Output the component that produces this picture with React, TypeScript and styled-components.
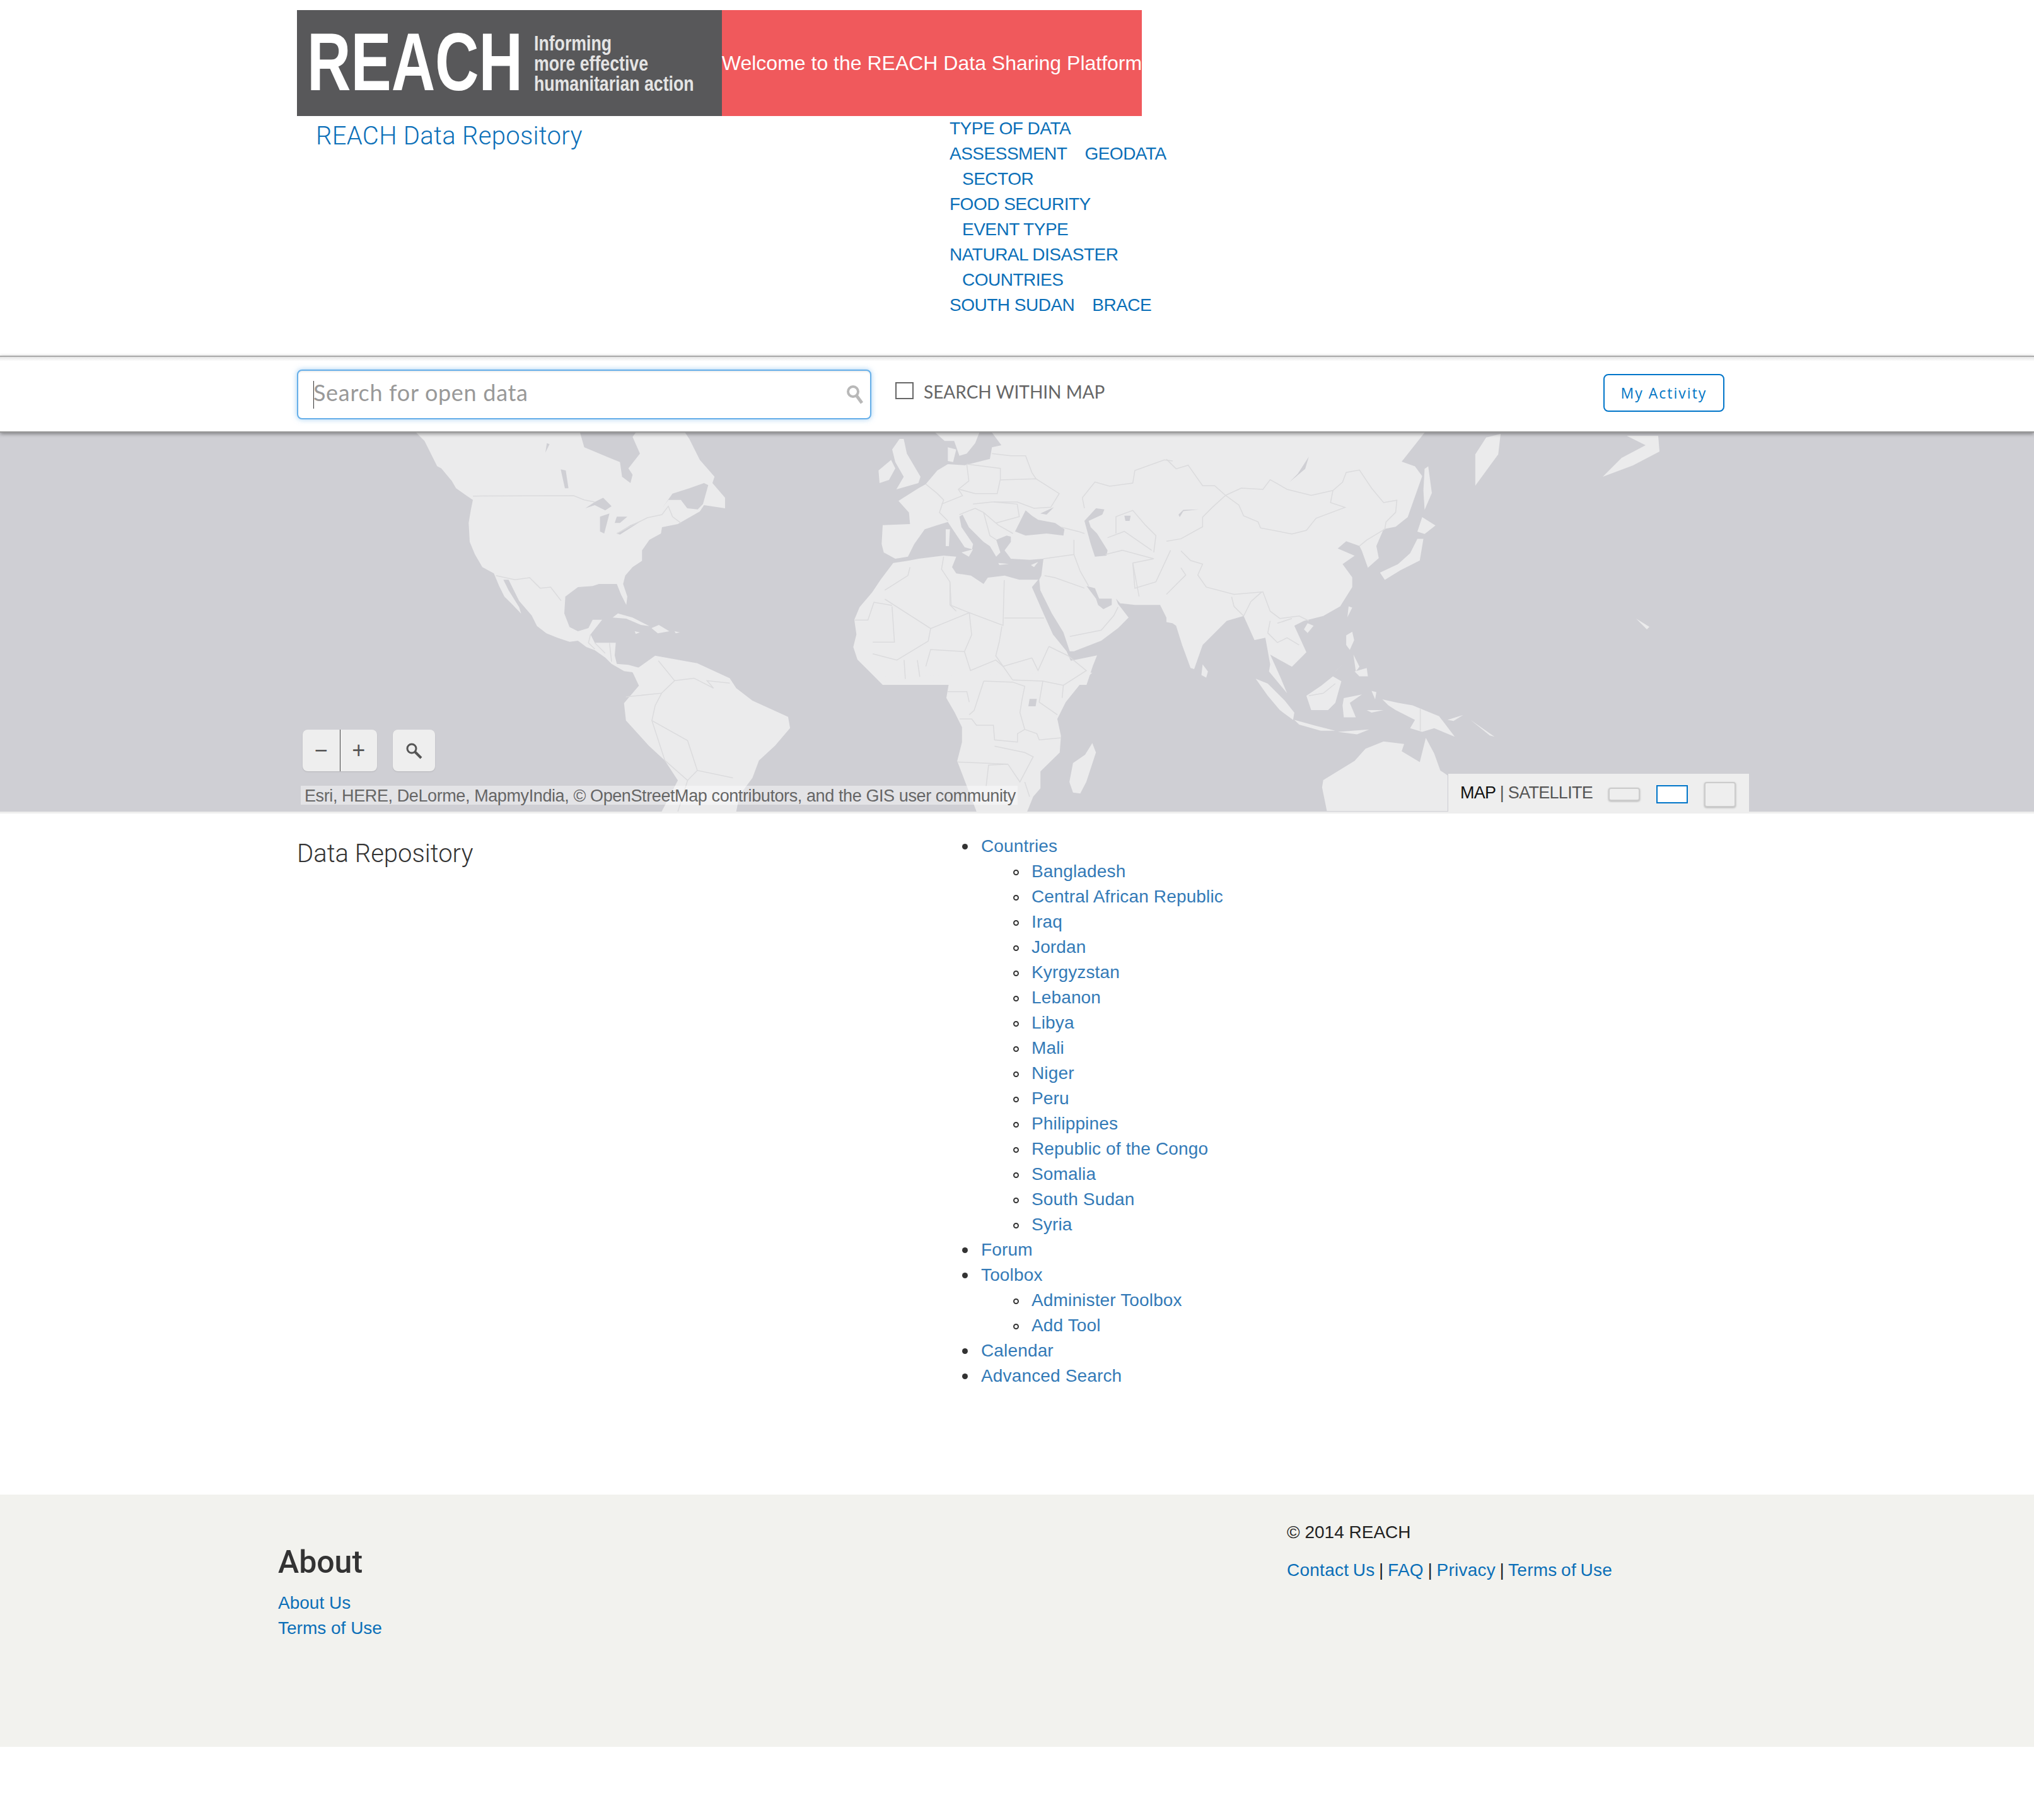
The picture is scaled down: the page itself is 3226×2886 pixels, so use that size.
import React from 'react'
import styled, { createGlobalStyle } from 'styled-components'

const LINK = '#0b6fb8'
const SUBLINK = '#337ab7'
const WATER = '#cfcfd4'
const LAND = '#ebebec'

const GlobalStyle = createGlobalStyle`
  html, body {
    margin: 0;
    padding: 0;
    background: #fff;
    font-family: "Liberation Sans", Arial, sans-serif;
    color: #333;
  }
  a { text-decoration: none; color: inherit; }
`

const Page = styled.div`
  width: 3226px;
  height: 2886px;
  overflow: hidden;
`

const Banner = styled.div`
  display: flex;
  width: 1340px;
  height: 168px;
  margin: 16px 0 0 471px;
`

const Logo = styled.div`
  width: 674px;
  display: flex;
  align-items: center;
  padding-left: 16px;
  box-sizing: border-box;
  background: #58585a;
  color: #fff;
`

const LogoMark = styled.div`
  width: 360px;
  margin-top: -4px;
  font-size: 130px;
  line-height: 130px;
  font-weight: 700;
  transform: scaleX(0.74);
  transform-origin: left center;
  white-space: nowrap;
`

const LogoTag = styled.div`
  margin-top: -1px;
  font-size: 34px;
  line-height: 32px;
  font-weight: 700;
  color: #e4e4e4;
  transform: scaleX(0.785);
  transform-origin: left center;
  white-space: nowrap;
`

const Welcome = styled.div`
  width: 666px;
  display: flex;
  align-items: center;
  justify-content: center;
  background: #f0595c;
  color: #fff;
  font-size: 32px;
  white-space: nowrap;
`

const TopRow = styled.div`
  display: flex;
  height: 380px;
  margin-left: 471px;
`

const SiteTitle = styled.div`
  width: 1004px;
  padding: 4px 0 0 30px;
  box-sizing: content-box;
  font-family: Roboto, "Liberation Sans", sans-serif;
  font-weight: 300;
  font-size: 40px;
  line-height: 56px;
  letter-spacing: 0.3px;
  color: ${LINK};
`

const Nav = styled.div`
  margin-left: 1px;
  font-size: 28px;
  line-height: 40px;
  letter-spacing: -0.5px;
  color: ${LINK};
`

const NavRow = styled.div<{ $indent?: boolean }>`
  display: flex;
  gap: 28px;
  padding-left: ${(p) => (p.$indent ? '20px' : '0')};
`

const SearchBand = styled.div`
  position: relative;
  z-index: 1;
  display: flex;
  align-items: center;
  height: 122px;
  padding: 0 491px 0 471px;
  box-sizing: border-box;
  background: linear-gradient(#e6e6e6 0, #fff 7px);
  border-top: 2px solid #aaa;
  border-bottom: 2px solid #999;
  box-shadow: 0 2px 6px rgba(0, 0, 0, 0.4);
`

const SearchBox = styled.div`
  position: relative;
  width: 911px;
  height: 79px;
  box-sizing: border-box;
  border: 2px solid #66afe9;
  border-radius: 8px;
  background: #fff;
  box-shadow: 0 0 8px rgba(102, 175, 233, 0.6), inset 0 2px 2px rgba(0, 0, 0, 0.07);
`

const SearchInput = styled.input`
  width: 100%;
  height: 100%;
  box-sizing: border-box;
  padding: 0 70px 6px 24px;
  border: 0;
  outline: 0;
  background: transparent;
  font-family: Lato, sans-serif;
  font-size: 36px;
  letter-spacing: 0.7px;
  color: #555;
  &::placeholder {
    color: #999;
    opacity: 1;
  }
`

const Caret = styled.span`
  position: absolute;
  left: 24px;
  top: 16px;
  width: 1px;
  height: 44px;
  background: #333;
`

const SearchGlyph = styled.svg`
  position: absolute;
  right: 10px;
  top: 22px;
  width: 28px;
  height: 32px;
`

const WithinMap = styled.label`
  display: flex;
  align-items: center;
  gap: 16px;
  margin: -8px 0 0 38px;
  font-family: Lato, sans-serif;
  font-size: 28px;
  color: #666;
  white-space: nowrap;
`

const CheckBox = styled.span`
  width: 29px;
  height: 27px;
  box-sizing: border-box;
  border: 2px solid #666;
  background: #fff;
  margin-top: -4px;
`

const ActivityButton = styled.button`
  margin: -4px 0 0 auto;
  width: 192px;
  height: 60px;
  background: #fff;
  border: 2px solid #0075c9;
  border-radius: 8px;
  font-family: "Open Sans", sans-serif;
  font-size: 23px;
  letter-spacing: 2px;
  color: #0075c4;
`

const MapArea = styled.div`
  position: relative;
  height: 601px;
  background: ${WATER};
  border-bottom: 3px solid #eee;
  overflow: hidden;
`

const MapSvg = styled.svg`
  display: block;
  width: 100%;
  height: 100%;
`

const Borders = styled.g`
  fill: none;
  stroke: #dbdbdd;
  stroke-width: 1.5px;
  path { vector-effect: non-scaling-stroke; }
`

const ZoomGroup = styled.div`
  position: absolute;
  left: 480px;
  top: 471px;
  display: flex;
  gap: 25px;
`

const ZoomPair = styled.div`
  display: flex;
  width: 118px;
  height: 66px;
  background: #eee;
  border-radius: 8px;
  box-shadow: 0 1px 2px rgba(0, 0, 0, 0.12);
`

const ZoomKey = styled.div<{ $divider?: boolean }>`
  flex: 1;
  display: flex;
  align-items: center;
  justify-content: center;
  font-size: 36px;
  color: #555;
  border-left: ${(p) => (p.$divider ? '1px solid #444' : '0')};
`

const LocateKey = styled.div`
  display: flex;
  align-items: center;
  justify-content: center;
  width: 67px;
  height: 66px;
  background: #eee;
  border-radius: 8px;
  box-shadow: 0 1px 2px rgba(0, 0, 0, 0.12);
`

const Attribution = styled.div`
  position: absolute;
  left: 477px;
  top: 560px;
  width: 1137px;
  height: 30px;
  box-sizing: border-box;
  padding-left: 6px;
  background: rgba(255, 255, 255, 0.42);
  font-size: 27px;
  line-height: 32px;
  letter-spacing: -0.4px;
  color: #666;
  white-space: nowrap;
`

const BasemapPanel = styled.div`
  position: absolute;
  left: 2297px;
  top: 541px;
  bottom: 0;
  width: 477px;
  display: flex;
  align-items: center;
  padding: 5px 21px 0 19px;
  box-sizing: border-box;
  background: #eee;
  font-size: 27px;
  letter-spacing: -0.7px;
  color: #555;
`

const MapLabel = styled.span`
  color: #111;
`

const PanelText = styled.div`
  flex: 1;
  margin-top: -5px;
  white-space: nowrap;
`

const Thumbs = styled.div`
  display: flex;
  align-items: center;
  gap: 26px;
`

const Thumb = styled.div<{ $h: number; $active?: boolean }>`
  width: 50px;
  height: ${(p) => p.$h}px;
  box-sizing: border-box;
  background: ${(p) => (p.$active ? '#fff' : '#eee')};
  border: 2px solid ${(p) => (p.$active ? '#0075c9' : '#ccc')};
  border-radius: ${(p) => (p.$active ? '0' : '4px')};
  box-shadow: ${(p) => (p.$active ? 'none' : '0 1px 3px rgba(0, 0, 0, 0.25)')};
`

const Content = styled.div`
  display: flex;
  height: 1080px;
  padding: 32px 0 0 471px;
  box-sizing: border-box;
`

const SectionTitle = styled.div`
  width: 1005px;
  padding-top: 4px;
  font-family: Roboto, "Liberation Sans", sans-serif;
  font-weight: 300;
  font-size: 40px;
  line-height: 56px;
  color: #333;
`

const SiteList = styled.ul`
  margin: 0;
  padding-left: 80px;
  list-style: none;
  font-size: 28px;
  line-height: 40px;
  letter-spacing: 0.15px;
  color: #333;
  a { color: ${SUBLINK}; }
  > li::before {
    content: '';
    display: inline-block;
    width: 9px;
    height: 9px;
    margin: 0 21px 0 -30px;
    vertical-align: 4px;
    border-radius: 50%;
    background: #333;
  }
`

const SubList = styled.ul`
  margin: 0;
  padding-left: 80px;
  list-style: none;
  > li::before {
    content: '';
    display: inline-block;
    width: 9px;
    height: 9px;
    margin: 0 20px 0 -29px;
    vertical-align: 3px;
    box-sizing: border-box;
    border: 2px solid #333;
    border-radius: 50%;
  }
`

const Footer = styled.footer`
  display: flex;
  height: 400px;
  padding-left: 441px;
  background: #f2f2ee;
  font-size: 28px;
  line-height: 40px;
  color: #222;
  a { color: ${LINK}; }
`

const FooterLeft = styled.div`
  width: 1600px;
  padding-top: 79px;
`

const FooterHeading = styled.div`
  font-family: Roboto, "Liberation Sans", sans-serif;
  font-weight: 500;
  font-size: 50px;
  line-height: 56px;
  margin-bottom: 17px;
  color: #333;
`

const FooterRight = styled.div`
  padding-top: 40px;
`

const FooterLinks = styled.div`
  margin-top: 20px;
  letter-spacing: 0.25px;
  word-spacing: -1.5px;
`

const navRows = [
  { links: ['TYPE OF DATA'] },
  { links: ['ASSESSMENT', 'GEODATA'] },
  { links: ['SECTOR'], indent: true },
  { links: ['FOOD SECURITY'] },
  { links: ['EVENT TYPE'], indent: true },
  { links: ['NATURAL DISASTER'] },
  { links: ['COUNTRIES'], indent: true },
  { links: ['SOUTH SUDAN', 'BRACE'] },
]

const countries = [
  'Bangladesh', 'Central African Republic', 'Iraq', 'Jordan', 'Kyrgyzstan', 'Lebanon', 'Libya', 'Mali',
  'Niger', 'Peru', 'Philippines', 'Republic of the Congo', 'Somalia', 'South Sudan', 'Syria',
]

const mapLayers = [
  {
    // North and Central America
    transform: 'translate(650 0) scale(0.3333)',
    land: [
      'M30 0L70 40 100 100 130 160 150 170 200 230 220 265 270 300 300 320 290 370 280 430 285 520 310 580 345 640 400 670 425 730 450 780 490 820 530 862 520 830 470 750 445 700 470 700 520 800 580 870 605 920 650 955 700 975 760 995 800 990 840 1020 880 1035 930 1070 960 1100 1020 1135 1060 1140 1085 1170 1095 1120 1040 1105 985 1100 975 1060 980 1000 920 1000 880 1000 860 960 915 890 870 890 850 930 800 945 760 925 735 860 740 780 800 735 870 730 900 720 985 720 1005 770 1030 820 1035 780 1015 720 1025 680 1060 640 1105 610 1105 560 1140 510 1195 480 1200 450 1275 435 1380 375 1400 345 1500 360 1500 310 1440 240 1450 210 1380 130 1330 30 1310 0Z',
      'M965 880L990 860 1060 880 1140 920 1100 915 1030 885Z',
      'M1150 930L1185 915 1235 945 1180 955Z',
      'M1070 945L1095 950 1075 958Z',
      'M1260 945L1285 950 1265 955Z',
    ],
    water: [
      'M810 0L830 70 950 120 1000 140 1010 210 1050 240 1060 200 1040 170 1095 100 1060 20 1075 0Z',
      'M1200 360L1250 290 1330 265 1400 240 1420 250 1395 340 1370 365 1320 360 1290 320 1230 320Z',
      'M835 360L880 330 920 310 960 350 930 370 880 345Z',
      'M905 400L950 385 925 480 905 470Z',
      'M985 400L1035 400 1000 430 975 430Z',
      'M985 480L1050 440 1110 415 1055 450 1000 485Z',
      'M718 175L742 180 755 265 738 265Z',
      'M652 50L665 55 645 95Z',
    ],
    borders: [
      'M300 302L780 300 830 320 880 330',
      'M985 480L1060 440 1130 405 1200 390 1230 350 1250 400 1290 430',
      'M410 680L500 700 570 690 620 740 670 735 720 800',
      'M860 960L850 1000 880 1030',
      'M880 1000L930 1050',
      'M950 1000L960 1090',
    ],
  },
  {
    // South America, traced from a crop that was stretched vertically
    transform: 'translate(0 -6) scale(1.0288 0.3954)',
    land: [
      'M975 975L1010 910 1075 940 1125 1000 1135 1040 1160 1090 1215 1155 1218 1200 1195 1270 1170 1330 1160 1400 1140 1470 1135 1535 1020 1535 1045 1410 1025 1330 1000 1270 965 1170 962 1100 985 1030Z',
    ],
    water: [],
    borders: [
      'M1015 930L1040 1010 1020 1060 965 1075',
      'M1040 1010L1070 1000 1100 1040 1090 1010 1125 1020',
      'M1020 1060L1010 1110 1005 1170 1060 1250 1075 1370 1130 1400',
      'M1005 1170L1025 1330 1060 1410 1045 1535',
      'M1075 1370L1060 1410',
    ],
  },
  {
    // Europe, Middle East, north of Africa
    transform: 'translate(1340 0) scale(0.3333)',
    land: [
      'M180 440L310 435 305 380 255 325 350 265 385 245 440 180 490 150 570 155 690 125 700 70 745 60 700 0 1560 0 1560 905 1530 880 1500 820 1380 820 1310 812 1290 790 1300 815 1350 880 1300 930 1220 990 1090 1040 1070 1040 1040 950 985 860 930 750 925 700 935 680 945 600 880 605 790 600 760 560 790 520 790 495 770 490 720 510 740 570 720 590 690 540 660 520 590 450 560 390 545 400 555 450 610 530 605 555 570 545 520 470 490 425 440 440 380 460 330 530 300 590 240 600 185 570 175 530Z',
      'M230 620L300 610 350 600 470 585 530 590 510 640 530 670 600 680 660 720 680 690 760 680 830 700 920 700 890 735 945 860 990 960 1055 1040 1075 1085 1200 1060 1180 1110 1150 1200 180 1200 130 1150 60 1080 40 1020 55 960 45 890 70 830 130 760 170 700Z',
      'M430 0L475 40 520 40 545 110 580 100 620 50 640 0Z',
      'M490 70L530 80 515 140 490 135Z',
      'M260 30L280 30 295 100 360 210 350 240 245 270 280 210 240 140 225 80Z',
      'M160 180L220 130 240 170 210 225 165 240Z',
      'M480 460L500 460 495 540 480 540Z',
      'M555 570L610 555 590 590Z',
      'M730 620L780 625 735 630Z',
      'M885 630L920 615 900 640Z',
    ],
    water: [
      'M810 470L860 370 890 395 920 415 1000 430 1045 460 1040 490 960 480 860 490Z',
      'M930 385L995 355 960 390Z',
      'M1140 420L1195 360 1235 365 1225 390 1160 420 1170 450 1200 480 1250 560 1245 585 1190 590 1170 530Z',
      'M1150 730L1190 740 1210 790 1270 790 1270 820 1230 840 1205 820 1195 790Z',
      'M1330 395L1360 395 1355 420 1335 420Z',
    ],
    borders: [
      'M385 245L440 290 470 320 450 380 490 420',
      'M580 150L590 230 540 270 560 300 460 340',
      'M580 150L740 170 740 220 725 290 620 290 545 270',
      'M700 100L790 110 860 110 890 190 910 220',
      'M740 225L910 220 1020 290 980 355 900 360 820 330 700 330 610 340',
      'M710 330L820 340 830 400 720 430',
      'M545 390L620 360 660 380 730 440 800 480',
      'M660 380L690 490 720 510',
      'M1030 450L1110 470 1140 480',
      'M1090 510L1090 580 945 600',
      'M1090 580L1120 660 1160 730',
      'M950 680L1000 690 1140 740',
      'M1370 620L1400 780',
      'M1240 580L1320 560 1470 600 1370 620',
      'M1130 310L1190 235 1260 255 1370 240 1380 180 1520 130 1560 135',
      'M1130 310L1140 360',
      'M1290 480L1290 400 1370 370 1430 440 1480 490 1470 570',
      'M1250 500L1330 470 1460 560',
      'M1370 620L1380 740 1480 710 1550 560',
      'M1070 970L1220 940 1280 870 1300 830',
      'M310 640L300 680 190 750',
      'M470 590L460 650 500 710 500 820 530 850',
    ],
  },
  {
    // rest of Africa
    transform: 'translate(1300 214) scale(0.3827 0.3333)',
    land: [
      'M230 520L1130 500 1090 540 1020 640 985 720 1000 800 995 880 915 970 915 1050 885 1090 860 1161 650 1161 640 1130 600 1010 570 920 590 830 590 760 560 690 525 620 535 555 480 545 430 520 300 545 260 540Z',
      'M1130 835L1145 880 1105 1020 1080 1075 1050 1070 1035 1020 1050 930 1100 890Z',
    ],
    water: ['M870 625L900 625 895 660 865 660Z'],
    borders: [
      'M270 150L460 290 620 215 760 275 765 60',
      'M300 185L310 355 220 355',
      'M145 250L200 250 225 165 300 180',
      'M460 290L450 350 320 440 220 410',
      'M620 215L630 320 600 400 460 390 440 470',
      'M765 240L930 240',
      'M755 280L745 350 730 420 800 535',
      'M600 400L625 490 730 440 760 470 880 430',
      'M880 430L905 490 950 375',
      'M950 375L1030 420 1105 490 1010 560 925 540 800 535',
      'M680 540L800 545 850 565 840 620 830 690 850 770 820 790 820 830 725 820 720 750 650 750 630 720 580 720',
      'M680 540L640 680 620 700',
      'M925 540L910 640 985 700',
      'M1010 560L1005 620',
      'M850 770L900 790 910 820 1000 810',
      'M570 925L780 935 830 1020 885 900 850 880 725 850',
      'M780 935L700 940 690 1040',
      'M850 1020L870 1090',
      'M530 590L610 590 620 640',
      'M540 70L545 180 620 215',
      'M350 440L355 530',
      'M405 440L415 520',
    ],
  },
  {
    // Asia and Australia
    transform: 'translate(1850 0) scale(0.3827)',
    land: [
      'M0 0L1070 0 975 120 1030 140 1060 180 1000 350 950 390 900 400 870 470 880 520 835 560 810 490 800 470 745 450 710 480 780 510 730 545 770 600 770 640 720 720 650 760 570 780 530 800 580 910 520 970 430 920 475 1020 500 1080 450 1020 425 990 430 960 410 850 365 860 320 760 250 780 150 880 115 980 100 975 65 880 40 800 25 790 0 785Z',
      'M650 1440L780 1360 825 1310 900 1280 985 1290 975 1320 1050 1365 1075 1265 1110 1330 1135 1400 1165 1420 1165 1568 665 1568 645 1470Z',
      'M150 960L172 990 165 1015 145 1005Z',
      'M585 790L610 800 585 830 570 815Z',
      'M755 720L770 725 750 765Z',
      'M885 580L960 545 1010 500 1040 440 1065 440 1050 530 970 570 905 610Z',
      'M1040 410L1060 350 1115 385 1070 420Z',
      'M1070 150L1085 140 1100 250 1070 320 1065 240Z',
      'M1280 90L1325 20 1385 5 1375 90 1280 220Z',
      'M745 840L770 825 778 860 760 900 745 880Z',
      'M775 920L800 970 785 990Z',
      'M780 990L830 975 835 1010 800 1010Z',
      'M700 990L730 960 705 985Z',
      'M370 1020L420 1040 490 1110 530 1160 525 1190 470 1150 420 1090Z',
      'M530 1190L620 1215 700 1235 640 1235 550 1210Z',
      'M710 1240L840 1230 790 1250Z',
      'M580 1090L640 1050 690 1010 725 1030 700 1120 670 1150 600 1150Z',
      'M735 1100L810 1085 760 1120 785 1180 735 1180 730 1130Z',
      'M850 1070L870 1075 865 1105Z',
      'M830 1150L900 1150 850 1160Z',
      'M895 1105L960 1120 1020 1130 1130 1175 1195 1260 1110 1225 1060 1240 1010 1225 1030 1190 950 1150 920 1130Z',
      'M1165 1190L1230 1170 1190 1195Z',
      'M1260 1190L1360 1260 1340 1255Z',
    ],
    water: [
      'M590 100L575 150 510 205 545 170Z',
      'M50 340L70 320 135 318 70 325 55 350Z',
    ],
    borders: [
      'M0 110L40 150 90 135 150 220 200 220 245 260',
      'M245 260L310 230 400 235 430 195 500 235 600 260 690 240 730 205 745 165 800 155 850 230 900 290 955 280 950 330 910 370 905 400 830 445 800 470',
      'M245 260L300 300 320 345 380 370 390 395 520 420 580 405 620 355 740 310 680 290 690 240',
      'M245 260L190 310 150 350 150 390 60 440 0 450',
      'M60 490L100 530 150 545 130 590 165 640 280 670 400 660 430 740 470 770 550 760 590 780',
      'M0 670L50 620 80 590 60 560',
      'M270 680L280 720 320 760 350 700 395 660',
      'M430 780L420 830 460 870 500 850 550 880',
      'M460 790L520 770',
      'M590 1090L650 1080 700 1040',
      'M1052 1145L1052 1235',
    ],
  },
  {
    // Kuril arc and Hawaii, in page pixels
    transform: '',
    land: [
      'M2580 5L2630 5 2632 30 2590 52 2542 70 2572 40 2610 20Z',
      'M2595 295L2616 308 2612 312Z',
    ],
    water: [],
    borders: [],
  },
]

export default function App() {
  return (
    <Page>
      <GlobalStyle />
      <Banner>
        <Logo>
          <LogoMark>REACH</LogoMark>
          <LogoTag>
            Informing
            <br />
            more effective
            <br />
            humanitarian action
          </LogoTag>
        </Logo>
        <Welcome>Welcome to the REACH Data Sharing Platform</Welcome>
      </Banner>

      <TopRow>
        <SiteTitle>REACH Data Repository</SiteTitle>
        <Nav>
          {navRows.map((row, i) => (
            <NavRow key={i} $indent={row.indent}>
              {row.links.map((l) => (
                <a key={l} href="#">{l}</a>
              ))}
            </NavRow>
          ))}
        </Nav>
      </TopRow>

      <SearchBand>
        <SearchBox>
          <SearchInput placeholder="Search for open data" />
          <Caret />
          <SearchGlyph viewBox="0 0 28 32">
            <circle cx="11" cy="11" r="8" fill="none" stroke="#b8b8b8" strokeWidth="4" />
            <line x1="17" y1="18" x2="25" y2="29" stroke="#b8b8b8" strokeWidth="5" />
          </SearchGlyph>
        </SearchBox>
        <WithinMap>
          <CheckBox />
          SEARCH WITHIN MAP
        </WithinMap>
        <ActivityButton>My Activity</ActivityButton>
      </SearchBand>

      <MapArea>
        <MapSvg viewBox="0 0 3226 601" preserveAspectRatio="none">
          <g fill={LAND}>
            {mapLayers.map((layer, i) => (
              <g key={i} transform={layer.transform}>
                {layer.land.map((d) => (
                  <path key={d} d={d} />
                ))}
              </g>
            ))}
          </g>
          <g fill={WATER}>
            {mapLayers.map((layer, i) => (
              <g key={i} transform={layer.transform}>
                {layer.water.map((d) => (
                  <path key={d} d={d} />
                ))}
              </g>
            ))}
          </g>
          <Borders>
            {mapLayers.map((layer, i) => (
              <g key={i} transform={layer.transform}>
                {layer.borders.map((d) => (
                  <path key={d} d={d} />
                ))}
              </g>
            ))}
          </Borders>
        </MapSvg>
        <ZoomGroup>
          <ZoomPair>
            <ZoomKey>−</ZoomKey>
            <ZoomKey $divider>+</ZoomKey>
          </ZoomPair>
          <LocateKey>
            <svg width="27" height="27" viewBox="0 0 27 27">
              <circle cx="10" cy="10" r="7" fill="none" stroke="#555" strokeWidth="3" />
              <line x1="15" y1="15" x2="25" y2="25" stroke="#555" strokeWidth="4" />
            </svg>
          </LocateKey>
        </ZoomGroup>
        <Attribution>Esri, HERE, DeLorme, MapmyIndia, © OpenStreetMap contributors, and the GIS user community</Attribution>
        <BasemapPanel>
          <PanelText>
            <MapLabel>MAP</MapLabel> | SATELLITE
          </PanelText>
          <Thumbs>
            <Thumb $h={21} />
            <Thumb $h={29} $active />
            <Thumb $h={40} />
          </Thumbs>
        </BasemapPanel>
      </MapArea>

      <Content>
        <SectionTitle>Data Repository</SectionTitle>
        <SiteList>
          <li>
            <a href="#">Countries</a>
            <SubList>
              {countries.map((c) => (
                <li key={c}>
                  <a href="#">{c}</a>
                </li>
              ))}
            </SubList>
          </li>
          <li>
            <a href="#">Forum</a>
          </li>
          <li>
            <a href="#">Toolbox</a>
            <SubList>
              <li>
                <a href="#">Administer Toolbox</a>
              </li>
              <li>
                <a href="#">Add Tool</a>
              </li>
            </SubList>
          </li>
          <li>
            <a href="#">Calendar</a>
          </li>
          <li>
            <a href="#">Advanced Search</a>
          </li>
        </SiteList>
      </Content>

      <Footer>
        <FooterLeft>
          <FooterHeading>About</FooterHeading>
          <div>
            <a href="#">About Us</a>
          </div>
          <div>
            <a href="#">Terms of Use</a>
          </div>
        </FooterLeft>
        <FooterRight>
          <div>© 2014 REACH</div>
          <FooterLinks>
            <a href="#">Contact Us</a> | <a href="#">FAQ</a> | <a href="#">Privacy</a> | <a href="#">Terms of Use</a>
          </FooterLinks>
        </FooterRight>
      </Footer>
    </Page>
  )
}
